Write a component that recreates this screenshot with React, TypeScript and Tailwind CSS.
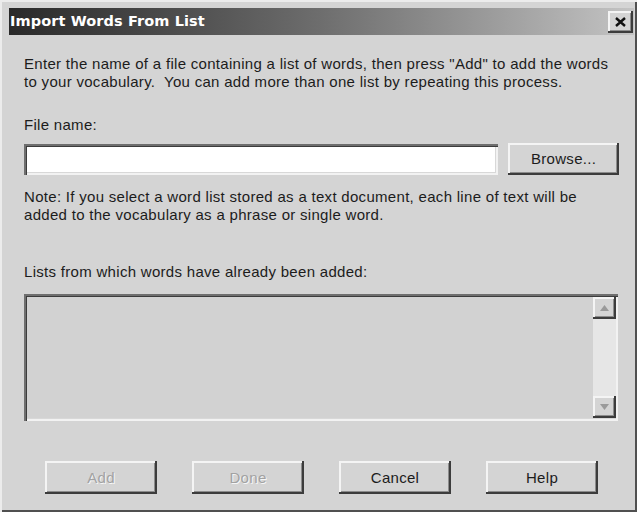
import React from 'react';

const raised =
  'shadow-[inset_-2px_-2px_0_#3c3c3c,inset_2px_2px_0_#f4f4f4,inset_-3px_-3px_0_#8c8c8c]';
const sunken =
  'shadow-[inset_2px_2px_0_#6e6e6e,inset_3px_3px_0_#3c3c3c,inset_-2px_-2px_0_#f2f2f2,inset_-3px_-3px_0_#d8d8d8]';

const DialogButton = ({ label, disabled }: { label: string; disabled?: boolean }) => (
  <button
    className={`w-[112px] h-[33px] bg-[#d4d4d4] text-[15px] tracking-[0.3px] ${raised} ${
      disabled ? 'text-[#a2a2a2] [text-shadow:1px_1px_0_#f6f6f6]' : 'text-[#1c1c1c]'
    }`}
  >
    {label}
  </button>
);

const Arrow = ({ up }: { up?: boolean }) => (
  <div className={`w-[23px] h-[22px] bg-[#d4d4d4] flex items-center justify-center ${raised}`}>
    <svg width="9" height="6" viewBox="0 0 9 6">
      <path d={up ? 'M4.5 0 L9 6 L0 6 Z' : 'M0 0 L9 0 L4.5 6 Z'} fill="#9a9a9a" />
    </svg>
  </div>
);

export default function App() {
  return (
    <div className="w-[637px] h-[512px] bg-[#d4d4d4] font-['Liberation_Sans',Arial,sans-serif] text-[#1c1c1c] overflow-hidden">
      <div className="h-full flex flex-col pt-[6px] pl-[7px] pr-[3px] pb-[2px] border-l-2 border-t-2 border-[#ececec] shadow-[inset_-2px_-2px_0_#505050]">
        {/* Title bar */}
        <div className="h-[27px] flex items-center justify-between pl-[1px] pr-[1px] bg-gradient-to-r from-[#2a2a2a] via-[#6e6e6e] to-[#c4c4c4]">
          <span className="font-['DejaVu_Sans',sans-serif] font-bold text-[14.5px] text-white tracking-[0.1px]">
            Import Words From List
          </span>
          <div className={`w-[25px] h-[22px] bg-[#d4d4d4] flex items-center justify-center ${raised}`}>
            <svg width="11" height="10" viewBox="0 0 11 10">
              <path d="M1 1 L10 9 M10 1 L1 9" stroke="#111" strokeWidth="2.4" />
            </svg>
          </div>
        </div>

        {/* Body */}
        <div className="flex-1 flex flex-col pl-[15px] pr-[15px] pt-[20px] text-[15px] leading-[18px] tracking-[0.3px]">
          <p>
            Enter the name of a file containing a list of words, then press "Add" to add the words
            <br />
            to your vocabulary.&nbsp; You can add more than one list by repeating this process.
          </p>

          <p className="mt-[25px]">File name:</p>

          <div className="mt-[9px] flex items-center gap-[10px]">
            <div className={`w-[475px] h-[31px] bg-white ${sunken}`} />
            <button className={`w-[111px] h-[32px] bg-[#d4d4d4] text-[15px] text-[#1c1c1c] ${raised}`}>
              Browse...
            </button>
          </div>

          <p className="mt-[13px]">
            Note: If you select a word list stored as a text document, each line of text will be
            <br />
            added to the vocabulary as a phrase or single word.
          </p>

          <p className="mt-[39px]">Lists from which words have already been added:</p>

          <div className={`mt-[13px] w-[594px] h-[127px] bg-[#d2d2d2] flex justify-end p-[3px] pr-[2px] ${sunken}`}>
            <div className="w-[23px] h-full flex flex-col bg-[#e6e6e6]">
              <Arrow up />
              <div className="flex-1" />
              <Arrow />
            </div>
          </div>

          <div className="mt-[40px] flex gap-[35px] pl-[21px]">
            <DialogButton label="Add" disabled />
            <DialogButton label="Done" disabled />
            <DialogButton label="Cancel" />
            <DialogButton label="Help" />
          </div>
        </div>
      </div>
    </div>
  );
}
